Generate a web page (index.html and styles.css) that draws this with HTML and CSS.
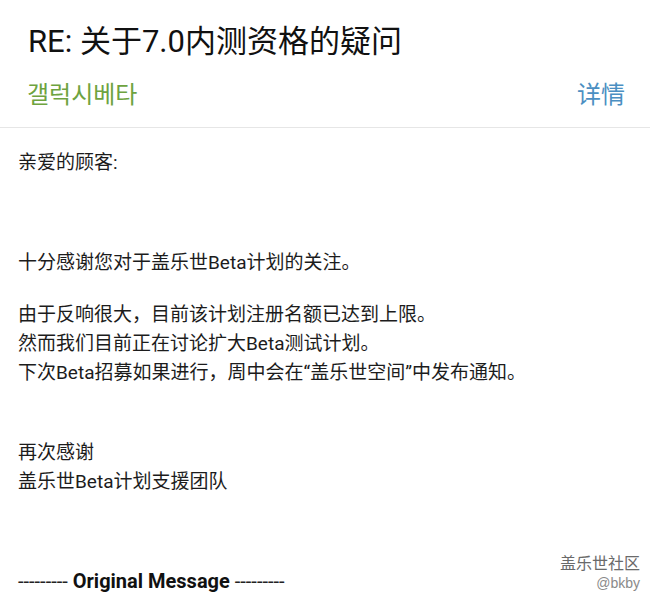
FILE: index.html
```html
<!DOCTYPE html>
<html>
<head>
<meta charset="utf-8">
<link rel="stylesheet" href="styles.css">
</head>
<body>
<div class="page">
  <header class="head">
    <h1 class="title">RE: 关于7.0内测资格的疑问</h1>
    <div class="meta">
      <span class="sender">갤럭시베타</span>
      <span class="detail">详情</span>
    </div>
  </header>
  <main class="mail">
    <p class="line p-greet">亲爱的顾客:</p>
    <p class="line p-thanks">十分感谢您对于盖乐世Beta计划的关注。</p>
    <p class="line p-body">由于反响很大，目前该计划注册名额已达到上限。<br>然而我们目前正在讨论扩大Beta测试计划。<br>下次Beta招募如果进行，周中会在“盖乐世空间”中发布通知。</p>
    <p class="line p-sign">再次感谢<br>盖乐世Beta计划支援团队</p>
    <p class="line p-orig">--------- <b>Original Message</b> ---------</p>
  </main>
  <div class="mark">
    <span class="mark-name">盖乐世社区</span>
    <span class="mark-user">@bkby</span>
  </div>
</div>
</body>
</html>
```
FILE: styles.css
```css
html, body {
  margin: 0;
  padding: 0;
  background: #ffffff;
}
.page {
  position: relative;
  width: 650px;
  height: 605px;
  overflow: hidden;
  font-family: Roboto, "Noto Sans CJK SC", sans-serif;
}
.head {
  padding: 24px 25px 0 28px;
  border-bottom: 1px solid #e6e6e6;
  height: 128px;
  box-sizing: border-box;
}
.title {
  margin: 0;
  font-size: 31px;
  line-height: 36px;
  font-weight: 400;
  color: #111111;
}
.meta {
  display: flex;
  justify-content: space-between;
  align-items: center;
  margin-top: 18px;
  margin-left: -1px;
  font-family: "Noto Sans CJK KR", "Noto Sans CJK SC", sans-serif;
  font-size: 24px;
  line-height: 30px;
}
.sender {
  color: #6ea33f;
}
.detail {
  color: #4b8fc2;
  font-family: "Noto Sans CJK SC", sans-serif;
  font-size: 24px;
}
.mail {
  padding: 20px 0 0 18px;
  color: #1c1c1c;
  font-size: 19px;
}
.line {
  margin: 0;
  line-height: 29px;
}
.p-thanks { margin-top: 71px; }
.p-body { margin-top: 23px; }
.p-sign { margin-top: 51px; }
.p-orig {
  margin-top: 71px;
  font-size: 20px;
  color: #222222;
}
.p-orig b {
  font-weight: 700;
  color: #111111;
}
.mark {
  position: absolute;
  right: 10px;
  bottom: 12px;
  display: flex;
  flex-direction: column;
  align-items: flex-end;
  color: #7a7a7a;
  font-family: "Noto Sans CJK SC", sans-serif;
}
.mark-name {
  font-size: 16px;
  line-height: 22px;
  color: #6a6a6a;
}
.mark-user {
  font-family: "Liberation Sans", sans-serif;
  font-size: 14px;
  line-height: 20px;
  color: #8a8a8a;
}
```
